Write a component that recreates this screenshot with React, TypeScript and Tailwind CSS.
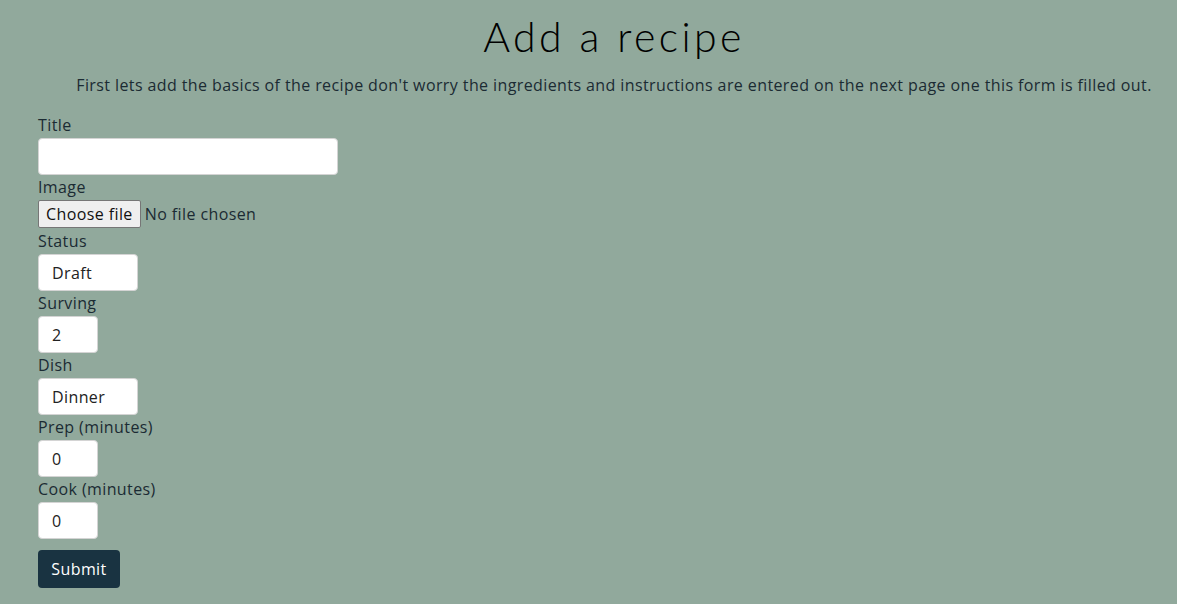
import React from "react";

const body = { fontFamily: '"Open Sans", "Noto Sans", sans-serif' };

function Label({ children }: { children: React.ReactNode }) {
  return <label className="block h-6 leading-6 text-[16px] text-[#1b2b33]">{children}</label>;
}

function Box({ w, value }: { w: string; value?: string }) {
  return (
    <div
      className={`${w} mt-px h-[37px] bg-white border border-[#d4d4d4] rounded-[4px] pl-[13px] flex items-center text-[16px] text-[#222]`}
    >
      {value}
    </div>
  );
}

export default function App() {
  return (
    <div className="min-h-[604px] w-full bg-[#91a99c] text-[#1b2b33] tracking-[0.4px]" style={body}>
      <div className="pl-[51px] text-center pt-[12px]">
        <h1
          className="text-[41px] leading-[50px] font-light tracking-[3.4px] text-black"
          style={{ fontFamily: '"Lato", "Noto Sans", sans-serif' }}
        >
          Add a recipe
        </h1>
        <p className="mt-[11px] text-[16px] leading-6 tracking-[0.4px] whitespace-nowrap">
          First lets add the basics of the recipe don't worry the ingredients and instructions are entered on the next page one this form is filled out.
        </p>
      </div>
      <form className="pl-[38px] mt-[16px] flex flex-col items-start">
        <Label>Title</Label>
        <Box w="w-[300px]" />
        <Label>Image</Label>
        <div className="flex items-center h-[30px] text-[16px]">
          <span className="h-[28px] px-[7px] flex items-center bg-[#efefef] border border-[#767676] rounded-[2px] text-[#111]">
            Choose file
          </span>
          <span className="ml-[4px] text-[#1b2b33]">No file chosen</span>
        </div>
        <Label>Status</Label>
        <Box w="w-[100px]" value="Draft" />
        <Label>Surving</Label>
        <Box w="w-[60px]" value="2" />
        <Label>Dish</Label>
        <Box w="w-[100px]" value="Dinner" />
        <Label>Prep (minutes)</Label>
        <Box w="w-[60px]" value="0" />
        <Label>Cook (minutes)</Label>
        <Box w="w-[60px]" value="0" />
        <button
          type="button"
          className="mt-[11px] h-[38px] w-[82px] bg-[#193341] text-white rounded-[4px] text-[16px]"
        >
          Submit
        </button>
      </form>
    </div>
  );
}
